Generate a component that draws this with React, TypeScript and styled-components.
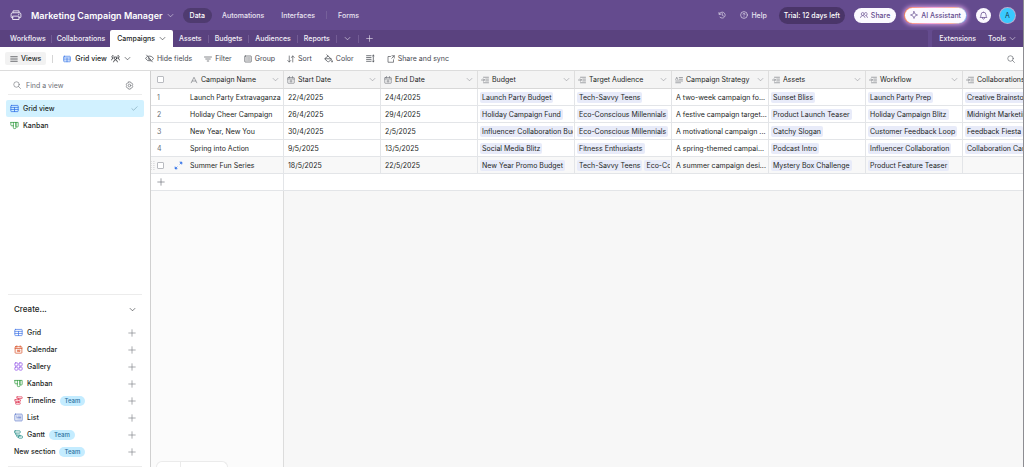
import React from "react";
import styled, { createGlobalStyle, css } from "styled-components";

const Global = createGlobalStyle`
  * { box-sizing: border-box; }
  html, body, #root { height: 100%; }
  body { margin: 0; font-family: Inter, "Liberation Sans", sans-serif; font-size: 7px; line-height: 11px; color: #1d1f25; background: #fff; }
  button, input { font: inherit; color: inherit; }
  button { border: 0; background: none; padding: 0; cursor: pointer; white-space: nowrap; }
  h1 { margin: 0; }
  a { color: inherit; text-decoration: none; }
`;

const Svg = styled.svg<{ $size: number; $color?: string }>`
  display: block;
  flex: none;
  width: ${(p) => p.$size}px;
  height: ${(p) => p.$size}px;
  color: ${(p) => p.$color ?? "inherit"};
  fill: none;
  stroke: currentColor;
  stroke-width: 1.3;
  stroke-linecap: round;
  stroke-linejoin: round;
`;

const shapes: Record<string, React.ReactNode> = {
  printer: <><path d="M4 5V2.500h8V5M4 11.500H2.500q-1 0-1-1V7q0-2 2-2h9q2 0 2 2v3.500q0 1-1 1H12M4 9.500h8V14H4z" /><path d="M11.500 7.300h.3" /></>,
  chevron: <path d="M2.500 5.500L8 11l5.500-5.500" />,
  plus: <path d="M8 1.500v13M1.500 8h13" />,
  menu: <path d="M1.500 3.500h13M1.500 8h13M1.500 12.500h13" />,
  grid: <><rect x="1.500" y="2.500" width="13" height="11" rx="1" /><path d="M1.500 6h13M1.500 9.700h13M8 6v7.500" /></>,
  people: <><circle cx="8" cy="7.500" r="2.200" /><path d="M4.500 14q.5-3.500 3.500-3.500t3.500 3.500M3.500 7a2 2 0 1 1 1.700-3M1 10.500q.5-2.500 2.500-3.500M12.500 7a2 2 0 1 0-1.700-3M15 10.500q-.5-2.500-2.500-3.500" /></>,
  share: <><circle cx="5.500" cy="6" r="3" /><path d="M1 13q1-4 4.500-4t4.500 4M10.300 3.200a3 3 0 1 1 .7 5.800q3 .2 4 4" /></>,
  hide: <path d="M3 2l10 12M6 4q6-1.500 9 4-1 2-2.700 3.200M10 12.200Q4 13.500 1 8q1-2 3-3.300M6.500 6.500a2.200 2.200 0 0 0 3 3.200" />,
  filter: <path d="M1 4h14M3.500 8h9M6.500 12h3" />,
  group: <><rect x="1.500" y="2" width="13" height="12" rx="1" /><path d="M4 6h1M7 6h5M4 10h1M7 10h5" /></>,
  sort: <path d="M4.500 2v12M1.500 11l3 3 3-3M11.500 14V2M8.500 5l3-3 3 3" />,
  color: <><path d="M5 1.500l8.500 8-5 4q-1 .5-2 0L2 9.500q-.5-1 0-2L7 4M2 8.500h10.500" /><path d="M14.500 12q1.500 2 0 2.500t-.5-2z" /></>,
  height: <path d="M1 3h8M1 6.300h8M1 9.600h8M1 13h8M13 2v12M11.500 3.500L13 2l1.500 1.500M11.500 12.500L13 14l1.500-1.500" />,
  external: <path d="M7 3H2v11.500h11V9.500M10 1.500h4.500V6M14.500 1.500L9.500 6.500" />,
  search: <><circle cx="7" cy="7" r="5.500" /><path d="M11 11l4 4" /></>,
  history: <path d="M2 3v3.500h3.500M2.500 6.500A6 6 0 1 1 4 12.500M8.500 5v3.500l2.500 1.500" />,
  help: <><circle cx="8" cy="8" r="6.800" /><path d="M6 6.500q0-2 2-2t2 2Q10 7.500 8 8.700M8 11.400v.2" /></>,
  sparkle: <path d="M8 1l2 5 5 2-5 2-2 5-2-5-5-2 5-2z" />,
  bell: <path d="M8 2Q3.500 2 3.500 7q0 3-1.500 4.500h12Q12.500 10 12.500 7q0-5-4.500-5M6 12q0 2.500 2 2.500t2-2.500" />,
  gear: <><path d="M6.500 1.500h3l.7 1.800 2 .3 1.500 2.200-.7 2.200.7 2.200-1.500 2.200-2 .3-.7 1.800h-3l-.7-1.800-2-.3-1.500-2.200L3 8l-.7-2.200 1.500-2.200 2-.3z" /><circle cx="8" cy="8" r="2.300" /></>,
  check: <path d="M2 8.500L6 12l8-8" />,
  kanban: <path d="M1.500 2.500h13v7q0 1-1 1h-2q-1 0-1-1v-7M10.500 2.500V12q0 1.500-1.500 1.500H7.500Q6 13.500 6 12V2.500M6 8.500H3q-1.500 0-1.500-1.500V2.500" />,
  calendar: <><rect x="2" y="3" width="12" height="11.500" rx="1" /><path d="M2 6.300h12M5 1.500V4M11 1.500V4M6 9v2.500M8.500 9h2v2.500h-2z" /></>,
  date: <><rect x="1.500" y="3" width="13" height="11.500" rx="1" /><path d="M1.500 6h13M5 1V4M11 1V4M8 8v4.500M5.700 10.200h4.600" /></>,
  gallery: <><rect x="1.500" y="1.500" width="5.500" height="5.500" rx="1.500" /><rect x="9" y="1.500" width="5.500" height="5.500" rx="1.500" /><rect x="1.500" y="9" width="5.500" height="5.500" rx="1.500" /><rect x="9" y="9" width="5.500" height="5.500" rx="1.500" /></>,
  timeline: <><rect x="5" y="1.500" width="9.500" height="3" rx=".5" /><rect x="1.500" y="6.500" width="10" height="3" rx=".5" /><rect x="3" y="11.500" width="8" height="3" rx=".5" /><path d="M8 4.500v2M8 9.500v2" /></>,
  list: <><rect x="1.500" y="2" width="13" height="12" rx="1" /><path d="M4 5.500h1M7 5.500h5M5 8h1M8 8h4M5 10.500h1M8 10.500h4" /></>,
  gantt: <><rect x="1" y="1.500" width="10" height="4" rx="1" /><rect x="8" y="10.500" width="7" height="4" rx="1" /><path d="M3 5.500V8q0 1 1 1h7v1.500M5 9v2.500q0 1 1 1h2" /></>,
  letter: <path d="M2.500 13.500L8 2.500l5.500 11M4.500 10h7" />,
  link: <path d="M5 2.500h10M9.500 6.200H15M9.500 9.800H15M5 13.500h10M1 8h6M4.500 5.500L7 8l-2.500 2.500" />,
  long: <path d="M1.500 7l2-4.500 2 4.500M8.500 3H15M8.500 6.500H15M1.500 10H15M1.500 13.500H11" />,
  expand: <><path d="M11 2h3v3zM5 14H2v-3z" fill="currentColor" /><path d="M12.500 3.500l-2 2M3.500 12.500l2-2" /></>,
  handle: <path d="M5.500 1v.1M10.500 1v.1M5.500 4.500v.1M10.500 4.500v.1M5.500 8v.1M10.500 8v.1M5.500 11.500v.1M10.500 11.500v.1M5.500 15v.1M10.500 15v.1" />,
};

const Icon = ({ name, size = 9, color }: { name: string; size?: number; color?: string }) => (
  <Svg viewBox="0 0 16 16" $size={size} $color={color} aria-hidden="true">{shapes[name]}</Svg>
);

const Spacer = styled.div`
  flex: 1;
`;
const Gap = styled.span<{ $w: number }>`
  flex: none;
  width: ${(p) => p.$w}px;
`;
const Divider = styled.span<{ $color: string; $gap?: number }>`
  flex: none;
  width: 1px;
  height: 8px;
  margin: 0 ${(p) => p.$gap ?? 0}px;
  background: ${(p) => p.$color};
`;

const Page = styled.div`
  display: flex;
  flex-direction: column;
  min-height: 100%;
  overflow: hidden;
  border-right: 1px solid #8d8d92;
`;

const TopBar = styled.header`
  display: flex;
  align-items: center;
  height: 30px;
  padding: 0 8px 0 10px;
  background: #644b8e;
  color: #e9e4f1;
`;
const BaseTitle = styled.h1`
  margin: 0 4px 0 9px;
  font-size: 9px;
  font-weight: 600;
  color: #fff;
  white-space: nowrap;
`;
const TopNav = styled.nav`
  display: flex;
  align-items: center;
  gap: 3px;
  margin-left: 9px;
`;
const NavPill = styled.a<{ $active?: boolean }>`
  padding: 2px 7px;
  border-radius: 8px;
  font-weight: 500;
  ${(p) => p.$active && css`background: #4f3b70; color: #fff;`}
`;
const TopButton = styled.button`
  display: flex;
  align-items: center;
  gap: 3px;
  font-weight: 500;
`;
const Trial = styled.button`
  height: 17px;
  margin: 0 9px 0 12px;
  padding: 0 5px;
  border-radius: 9px;
  background: #4a3569;
  color: #fff;
  font-weight: 500;
`;
const White = styled(TopButton)<{ $glow?: boolean }>`
  height: 15px;
  padding: 0 6px;
  border-radius: 8px;
  background: #fbf9ff;
  color: #644b8e;
  ${(p) => p.$glow && css`
    height: 17px;
    padding: 0 5px;
    border: 1px solid transparent;
    border-radius: 9px;
    background:
      linear-gradient(#fbf9ff, #fbf9ff) padding-box,
      linear-gradient(100deg, #ff8f5e, #f3a6d8 45%, #ffb09a 75%, #7fb0ff) border-box;
    box-shadow: 0 0 4px 1px #d49be0;
  `}
`;
const Round = styled.button<{ $blue?: boolean }>`
  display: grid;
  place-items: center;
  flex: none;
  width: 15px;
  height: 15px;
  margin-left: 9px;
  border-radius: 50%;
  background: ${(p) => (p.$blue ? "#39caff" : "#fbf9ff")};
  color: ${(p) => (p.$blue ? "#1d3a50" : "#644b8e")};
  box-shadow: ${(p) => (p.$blue ? "0 0 0 1px #b9acd0" : "none")};
`;

const TabBar = styled.div`
  display: flex;
  height: 17px;
  gap: 4px;
  background: #644b8e;
  color: #f4f1f8;
`;
const Tabs = styled.nav`
  flex: 1;
  display: flex;
  align-items: center;
  padding-left: 5px;
  background: #5a427f;
  border-top-right-radius: 2px;
`;
const Tab = styled.a<{ $active?: boolean; $roomy?: boolean }>`
  display: flex;
  align-items: center;
  gap: 4px;
  height: 17px;
  padding: 0 ${(p) => (p.$roomy ? 6 : 5)}px;
  font-weight: 500;
  white-space: nowrap;
  ${(p) => p.$active && css`
    background: #fff;
    color: #1d1f25;
    border-radius: 2px 2px 0 0;
    padding: 0 7px;
  `}
`;
const TabButton = styled.button`
  display: grid;
  place-items: center;
  padding: 0 7px;
`;
const TabTools = styled.div`
  display: flex;
  align-items: center;
  gap: 12px;
  padding: 0 7px;
  background: #5a427f;
  border-top-left-radius: 2px;
`;

const Toolbar = styled.div`
  display: flex;
  align-items: center;
  height: 24px;
  padding: 0 8px 0 5px;
  border-bottom: 1px solid #dcdcdc;
`;
const Tool = styled.button<{ $fill?: boolean; $strong?: boolean }>`
  display: flex;
  align-items: center;
  gap: ${(p) => (p.$strong ? 4 : 3)}px;
  height: 13px;
  margin-right: ${(p) => (p.$strong ? 14 : 12)}px;
  color: ${(p) => (p.$strong ? "#1d1f25" : "#45484f")};
  font-weight: ${(p) => (p.$strong ? 500 : 400)};
  ${(p) => p.$fill && css`
    gap: 3px;
    padding: 0 5px;
    margin-right: 6px;
    border-radius: 2px;
    background: #f2f2f2;
  `}
`;

const Body = styled.div`
  flex: 1;
  display: flex;
`;
const Sidebar = styled.aside`
  flex: none;
  display: flex;
  flex-direction: column;
  width: 151px;
  padding: 5px 6px 0;
  border-right: 1px solid #d0d0d0;
`;
const Find = styled.div`
  display: flex;
  align-items: center;
  gap: 5px;
  height: 19px;
  margin: 0 2px 5px;
  padding: 0 8px 0 5px;
  border-bottom: 1px solid #ececec;
`;
const FindInput = styled.input`
  flex: 1;
  min-width: 0;
  padding: 0;
  border: 0;
  outline: 0;
  background: none;
  &::placeholder { color: #6d7076; opacity: 1; }
`;
const ViewItem = styled.button<{ $active?: boolean }>`
  display: flex;
  align-items: center;
  gap: 4px;
  height: 17px;
  padding: 0 6px 0 4px;
  border-radius: 2px;
  font-weight: 500;
  background: ${(p) => (p.$active ? "#d1f1ff" : "none")};
`;
const Create = styled.section`
  display: flex;
  flex-direction: column;
  margin: 0 2px;
  padding: 6px 6px;
  border-top: 1px solid #ececec;
  border-bottom: 1px solid #ececec;
`;
const CreateHead = styled.button`
  display: flex;
  align-items: center;
  justify-content: space-between;
  height: 17px;
  margin-bottom: 6px;
  font-size: 8px;
  font-weight: 500;
`;
const CreateItem = styled.button`
  display: flex;
  align-items: center;
  gap: 4px;
  height: 17px;
  font-weight: 500;
`;
const Team = styled.span`
  padding: 0 5px;
  border-radius: 5px;
  line-height: 10px;
  background: #c4ecff;
  color: #2a6f9c;
  font-size: 6px;
`;

const GridArea = styled.main`
  flex: 1;
  min-width: 0;
  display: flex;
  flex-direction: column;
  overflow: hidden;
  background: #f7f7f7;
`;
const Sheet = styled.table`
  table-layout: fixed;
  width: 909px;
  border-collapse: separate;
  border-spacing: 0;
`;
const Col = styled.col<{ $w: number }>`
  width: ${(p) => p.$w}px;
`;
const Th = styled.th<{ $frozen?: boolean }>`
  height: 18px;
  padding: 0 4px 0 3px;
  background: #f4f4f4;
  font-weight: 400;
  text-align: left;
  border-bottom: 1px solid #d8d8d8;
  border-right: ${(p) => (p.$frozen ? "0" : "1px solid #dedede")};
`;
const HeadRow = styled.div`
  display: flex;
  align-items: center;
  gap: 3px;
  white-space: nowrap;
`;
const HeadText = styled.span`
  flex: 1;
`;
const Row = styled.tr<{ $hover?: boolean }>`
  background: ${(p) => (p.$hover ? "#f8f8f8" : "#fff")};
`;
type Kind = "num" | "name" | "link" | "text" | "blank";
const Td = styled.td<{ $kind: Kind }>`
  height: 17px;
  padding: 0 ${(p) => (p.$kind === "link" ? 3 : 0)}px 0 ${(p) => (p.$kind === "num" || p.$kind === "name" ? 3 : 4)}px;
  border-bottom: 1px solid #e3e5e8;
  border-right: ${(p) => (p.$kind === "num" || p.$kind === "blank" ? "0" : "1px solid #e3e5e8")};
  overflow: hidden;
  white-space: nowrap;
`;
const Chips = styled.div`
  display: flex;
  gap: 2px;
  margin: 0 -2px;
  overflow: hidden;
`;
const Chip = styled.span`
  flex: none;
  padding: 0 2px;
  border-radius: 2px;
  background: #e8ebf9;
`;
const RowTools = styled.div<{ $hover?: boolean }>`
  display: flex;
  align-items: center;
  padding-left: ${(p) => (p.$hover ? 0 : 3)}px;
  margin-left: ${(p) => (p.$hover ? -6 : 0)}px;
  color: #6b6e75;
`;
const Box = styled.input`
  appearance: none;
  flex: none;
  display: block;
  width: 7px;
  height: 7px;
  margin: 0;
  border: 1px solid #b9bbc0;
  border-radius: 1px;
  background: #fff;
`;
const Rest = styled.div`
  flex: 1;
  display: flex;
  align-items: flex-end;
  width: 133px;
  padding-left: 5px;
  background: #fbfbfb;
  border-right: 1px solid #dcdcdc;
`;
const AddBar = styled.div`
  display: flex;
  width: 72px;
  height: 6px;
  border: 1px solid #ebebeb;
  border-bottom: 0;
  border-radius: 6px 6px 0 0;
  background: #fff;
`;
const AddPart = styled.span`
  width: 24px;
  border-right: 1px solid #ebebeb;
`;

const columns: [string, string][] = [
  ["Start Date", "date"], ["End Date", "date"], ["Budget", "link"], ["Target Audience", "link"],
  ["Campaign Strategy", "long"], ["Assets", "link"], ["Workflow", "link"], ["Collaborations", "link"],
];
type Cell = string | string[];
const rows: Cell[][] = [
  ["Launch Party Extravaganza", "22/4/2025", "24/4/2025", ["Launch Party Budget"], ["Tech-Savvy Teens"], "A two-week campaign fo...", ["Sunset Bliss"], ["Launch Party Prep"], ["Creative Brainstorm"]],
  ["Holiday Cheer Campaign", "26/4/2025", "29/4/2025", ["Holiday Campaign Fund"], ["Eco-Conscious Millennials"], "A festive campaign target...", ["Product Launch Teaser"], ["Holiday Campaign Blitz"], ["Midnight Marketing"]],
  ["New Year, New You", "30/4/2025", "2/5/2025", ["Influencer Collaboration Budget"], ["Eco-Conscious Millennials", "Fitness"], "A motivational campaign ...", ["Catchy Slogan"], ["Customer Feedback Loop"], ["Feedback Fiesta"]],
  ["Spring into Action", "9/5/2025", "13/5/2025", ["Social Media Blitz"], ["Fitness Enthusiasts"], "A spring-themed campai...", ["Podcast Intro"], ["Influencer Collaboration"], ["Collaboration Carnival"]],
  ["Summer Fun Series", "18/5/2025", "22/5/2025", ["New Year Promo Budget"], ["Tech-Savvy Teens", "Eco-Conscious"], "A summer campaign desi...", ["Mystery Box Challenge"], ["Product Feature Teaser"], []],
];
const createItems: [string, string, string, boolean][] = [
  ["Grid", "grid", "#4a7be8", false], ["Calendar", "calendar", "#d9542b", false], ["Gallery", "gallery", "#9355e8", false],
  ["Kanban", "kanban", "#2f9a3c", false], ["Timeline", "timeline", "#e0405c", true], ["List", "list", "#5c77c9", false],
  ["Gantt", "gantt", "#1f8a84", true], ["New section", "", "", true],
];

export default function App() {
  return (
    <Page>
      <Global />
      <TopBar>
        <Icon name="printer" size={12} />
        <BaseTitle>Marketing Campaign Manager</BaseTitle>
        <Icon name="chevron" size={7} />
        <TopNav>
          <NavPill href="#data" $active>Data</NavPill>
          <NavPill href="#automations">Automations</NavPill>
          <NavPill href="#interfaces">Interfaces</NavPill>
          <Divider $color="#75609a" $gap={1} />
          <NavPill href="#forms">Forms</NavPill>
        </TopNav>
        <Spacer />
        <TopButton aria-label="History"><Icon name="history" size={8} /></TopButton>
        <Gap $w={14} />
        <TopButton><Icon name="help" size={8} />Help</TopButton>
        <Trial>Trial: 12 days left</Trial>
        <White><Icon name="share" size={8} />Share</White>
        <Gap $w={8} />
        <White $glow><Icon name="sparkle" size={8} />AI Assistant</White>
        <Round aria-label="Notifications"><Icon name="bell" size={9} /></Round>
        <Round $blue>A</Round>
      </TopBar>

      <TabBar>
        <Tabs>
          <Tab href="#workflows">Workflows</Tab>
          <Divider $color="#735c95" />
          <Tab href="#collaborations">Collaborations</Tab>
          <Tab href="#campaigns" $active>Campaigns<Icon name="chevron" size={7} /></Tab>
          <Tab href="#assets" $roomy>Assets</Tab>
          <Divider $color="#735c95" />
          <Tab href="#budgets" $roomy>Budgets</Tab>
          <Divider $color="#735c95" />
          <Tab href="#audiences" $roomy>Audiences</Tab>
          <Divider $color="#735c95" />
          <Tab href="#reports" $roomy>Reports</Tab>
          <Divider $color="#735c95" />
          <TabButton aria-label="More tables"><Icon name="chevron" size={7} /></TabButton>
          <Divider $color="#735c95" />
          <TabButton aria-label="Add table"><Icon name="plus" size={7} /></TabButton>
        </Tabs>
        <TabTools>
          <TopButton>Extensions</TopButton>
          <TopButton>Tools<Icon name="chevron" size={7} /></TopButton>
        </TabTools>
      </TabBar>

      <Toolbar>
        <Tool $fill $strong><Icon name="menu" size={8} />Views</Tool>
        <Divider $color="#d5d5d5" />
        <Gap $w={10} />
        <Tool $strong><Icon name="grid" size={8} color="#2d6fe8" />Grid view<Icon name="people" /><Icon name="chevron" size={7} /></Tool>
        <Tool><Icon name="hide" />Hide fields</Tool>
        <Tool><Icon name="filter" size={8} />Filter</Tool>
        <Tool><Icon name="group" size={8} />Group</Tool>
        <Tool><Icon name="sort" size={8} />Sort</Tool>
        <Tool><Icon name="color" />Color</Tool>
        <Tool aria-label="Row height"><Icon name="height" /></Tool>
        <Tool><Icon name="external" size={8} />Share and sync</Tool>
        <Spacer />
        <TopButton aria-label="Search"><Icon name="search" size={8} color="#60636a" /></TopButton>
      </Toolbar>

      <Body>
        <Sidebar>
          <Find>
            <Icon name="search" size={8} color="#777a80" />
            <FindInput aria-label="Find a view" placeholder="Find a view" />
            <TopButton aria-label="View settings"><Icon name="gear" color="#777a80" /></TopButton>
          </Find>
          <ViewItem $active><Icon name="grid" color="#2d6fe8" />Grid view<Spacer /><Icon name="check" size={7} color="#6f9aab" /></ViewItem>
          <ViewItem><Icon name="kanban" color="#2f9a3c" />Kanban</ViewItem>
          <Spacer />
          <Create>
            <CreateHead>Create...<Icon name="chevron" size={7} /></CreateHead>
            {createItems.map(([label, icon, color, team]) => (
              <CreateItem key={label}>
                {icon && <Icon name={icon} color={color} />}
                {label}
                {team && <Team>Team</Team>}
                <Spacer />
                <Icon name="plus" size={8} color="#7d8087" />
              </CreateItem>
            ))}
          </Create>
        </Sidebar>

        <GridArea>
          <Sheet>
            <colgroup>
              <Col $w={36} />
              <Col $w={97} />
              {columns.map(([name]) => <Col key={name} $w={97} />)}
            </colgroup>
            <thead>
              <tr>
                <Th $frozen><RowTools><Box type="checkbox" aria-label="Select all rows" /></RowTools></Th>
                <Th scope="col"><HeadRow><Icon name="letter" size={8} color="#777a80" /><HeadText>Campaign Name</HeadText><Icon name="chevron" size={7} color="#8d9096" /></HeadRow></Th>
                {columns.map(([name, icon]) => (
                  <Th key={name} scope="col"><HeadRow><Icon name={icon} size={8} color="#777a80" /><HeadText>{name}</HeadText><Icon name="chevron" size={7} color="#8d9096" /></HeadRow></Th>
                ))}
              </tr>
            </thead>
            <tbody>
              {rows.map((cells, i) => (
                <Row key={i} $hover={i === 4}>
                  <Td $kind="num">
                    {i === 4
                      ? <RowTools $hover><Icon name="handle" size={9} color="#b5b7bb" /><Box type="checkbox" aria-label="Select row 5" /><Gap $w={10} /><Icon name="expand" color="#2d6fe8" /></RowTools>
                      : <RowTools>{i + 1}</RowTools>}
                  </Td>
                  {cells.map((cell, j) => Array.isArray(cell)
                    ? <Td key={j} $kind="link"><Chips>{cell.map((c) => <Chip key={c}>{c}</Chip>)}</Chips></Td>
                    : <Td key={j} $kind={j === 0 ? "name" : "text"}>{cell}</Td>)}
                </Row>
              ))}
              <Row>
                <Td $kind="num"><RowTools><button aria-label="Add record"><Icon name="plus" size={8} /></button></RowTools></Td>
                <Td $kind="name" />
                <Td $kind="blank" colSpan={8} />
              </Row>
            </tbody>
          </Sheet>
          <Rest>
            <AddBar><AddPart /></AddBar>
          </Rest>
        </GridArea>
      </Body>
    </Page>
  );
}
